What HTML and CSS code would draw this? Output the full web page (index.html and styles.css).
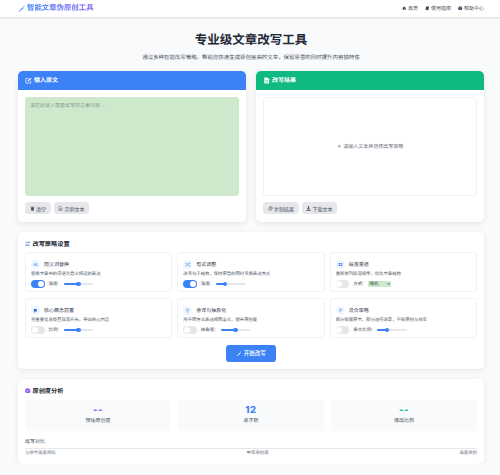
FILE: index.html
```html
<!DOCTYPE html>
<html lang="zh">
<head>
<meta charset="utf-8">
<title>智能文章伪原创工具</title>
<link rel="stylesheet" href="styles.css">
</head>
<body>
<header class="topbar">
  <div class="brand">
    <svg class="brand-icon" viewBox="0 0 16 16"><path d="M1 15 L11 5 L13 7 L3 15 Z M12 4 L14 1 L15 2 L13.500 5 Z" fill="#3b82f6"/></svg>
    <span class="brand-text">智能文章伪原创工具</span>
  </div>
  <nav class="nav">
    <a class="nav-item"><svg class="nav-icon" viewBox="0 0 16 16"><path d="M8 2 L15 8 H13 V14 H9.500 V10 H6.500 V14 H3 V8 H1 Z" fill="#374151"/></svg>首页</a>
    <a class="nav-item"><svg class="nav-icon" viewBox="0 0 16 16"><path d="M4 2 H14 L12 14 H2 Z" fill="#374151"/></svg>使用指南</a>
    <a class="nav-item"><svg class="nav-icon" viewBox="0 0 16 16"><circle cx="8" cy="8" r="7" fill="#374151"/><path d="M6 6.500 A2 2 0 1 1 8 8.500 V10 M8 11.500 V13" stroke="#fff" stroke-width="1.600" fill="none"/></svg>帮助中心</a>
  </nav>
</header>
<main class="page">
  <section class="hero">
    <h1 class="hero-title">专业级文章改写工具</h1>
    <p class="hero-sub">通过多种智能改写策略，帮助您快速生成原创度高的文章，保留原意的同时提升内容独特性</p>
  </section>
  <section class="editors">
    <article class="panel">
      <div class="panel-head head-blue">
        <svg class="head-icon" viewBox="0 0 16 16"><path d="M13 9 V14 H2 V3 H8" fill="none" stroke="#fff" stroke-width="1.500"/><path d="M6 10 L6.500 7.500 L13 1.500 L15 3.500 L8.500 9.500 Z" fill="#fff"/></svg>
        <span>输入原文</span>
      </div>
      <div class="panel-body">
        <div class="input-box">请在此输入需要改写的文章内容...</div>
        <div class="actions">
          <button class="btn"><svg class="btn-icon" viewBox="0 0 16 16"><path d="M3 5 H13 L12 15 H4 Z M2 2.500 H14 V4 H2 Z" fill="#4b5563"/></svg>清空</button>
          <button class="btn"><svg class="btn-icon" viewBox="0 0 16 16"><path d="M3 1.500 H10 L13 4.500 V14.500 H3 Z M5 8 H11 M5 11 H11" fill="none" stroke="#4b5563" stroke-width="1.400"/></svg>示例文本</button>
        </div>
      </div>
    </article>
    <article class="panel">
      <div class="panel-head head-green">
        <svg class="head-icon" viewBox="0 0 16 16"><path d="M3 1 H10 L14 5 V15 H3 Z" fill="#fff"/><path d="M5.500 8.500 H11.500 M5.500 11.500 H11.500" stroke="#10b981" stroke-width="1.300"/></svg>
        <span>改写结果</span>
      </div>
      <div class="panel-body">
        <div class="output-box">
          <svg class="hint-icon" viewBox="0 0 16 16"><path d="M8 2 V14 M2 8 H14" stroke="#9ca3af" stroke-width="3"/></svg>
          <span>请输入文本并选择改写策略</span>
        </div>
        <div class="actions">
          <button class="btn"><svg class="btn-icon" viewBox="0 0 16 16"><circle cx="7" cy="9" r="5.500" fill="none" stroke="#4b5563" stroke-width="1.400"/><circle cx="10" cy="6" r="4.500" fill="none" stroke="#4b5563" stroke-width="1.400"/></svg>复制结果</button>
          <button class="btn"><svg class="btn-icon" viewBox="0 0 16 16"><path d="M6 1 H10 V6 H13 L8 11 L3 6 H6 Z M1 12 H15 V15 H1 Z" fill="#4b5563"/></svg>下载文本</button>
        </div>
      </div>
    </article>
  </section>
  <section class="card settings">
    <h2 class="card-title">
      <svg class="title-icon" viewBox="0 0 16 16"><path d="M1 4 H9 M13 4 H15 M1 12 H3 M7 12 H15" stroke="#3b82f6" stroke-width="2"/><path d="M11 1.500 V6.500 M5 9.500 V14.500" stroke="#1e3a8a" stroke-width="2"/></svg>
      改写策略设置
    </h2>
    <div class="strategies">
      <div class="strategy">
        <div class="strategy-head"><span class="badge"><svg viewBox="0 0 16 16"><path d="M2 12 L4.500 4 L7 12 M3 9.500 H6 M9 4 V12 H12 A2 2 0 0 0 12 8 H9 M14 4 H9" fill="none" stroke="#3b82f6" stroke-width="1.300"/></svg></span><span class="strategy-name">同义词替换</span></div>
        <p class="strategy-desc">替换文章中的词语为意义相近的表达</p>
        <div class="controls"><span class="toggle on"></span><span class="ctl-label">强度:</span><span class="slider"><span class="fill fill-50"></span></span></div>
      </div>
      <div class="strategy">
        <div class="strategy-head"><span class="badge"><svg viewBox="0 0 16 16"><path d="M1 4 H4 L11 12 H14 M1 12 H4 L11 4 H14" fill="none" stroke="#3b82f6" stroke-width="1.800"/><path d="M13 1.500 L16 4 L13 6.500 Z M13 9.500 L16 12 L13 14.500 Z" fill="#3b82f6"/></svg></span><span class="strategy-name">句式调整</span></div>
        <p class="strategy-desc">改变句子结构，保持原意的同时变换表达方式</p>
        <div class="controls"><span class="toggle on"></span><span class="ctl-label">强度:</span><span class="slider"><span class="fill fill-25"></span></span></div>
      </div>
      <div class="strategy">
        <div class="strategy-head"><span class="badge"><svg viewBox="0 0 16 16"><path d="M2 3 H7 V7 H2 Z M9 3 H14 V7 H9 Z M2 9 H7 V13 H2 Z M9 9 H14 V13 H9 Z" fill="#3b82f6"/></svg></span><span class="strategy-name">段落重组</span></div>
        <p class="strategy-desc">重新排列段落顺序，优化文章结构</p>
        <div class="controls"><span class="toggle"></span><span class="ctl-label">方式:</span><span class="select">随机<svg class="caret" viewBox="0 0 8 8"><path d="M1 2.500 L4 5.500 L7 2.500" fill="none" stroke="#1f2937" stroke-width="1.500"/></svg></span></div>
      </div>
      <div class="strategy">
        <div class="strategy-head"><span class="badge"><svg viewBox="0 0 16 16"><path d="M3 3 H13 L11 7 L13 11 H5 V14 H3 Z" fill="#2563eb"/></svg></span><span class="strategy-name">核心概念前置</span></div>
        <p class="strategy-desc">将重要信息移至段落开头，突出核心内容</p>
        <div class="controls"><span class="toggle"></span><span class="ctl-label">比例:</span><span class="slider"><span class="fill fill-50"></span></span></div>
      </div>
      <div class="strategy">
        <div class="strategy-head"><span class="badge"><svg viewBox="0 0 16 16"><circle cx="8" cy="6" r="4" fill="none" stroke="#3b82f6" stroke-width="1.500"/><path d="M6 12 H10 M6.500 14 H9.500" stroke="#3b82f6" stroke-width="1.300"/></svg></span><span class="strategy-name">意译与抽象化</span></div>
        <p class="strategy-desc">用不同方式表达相同含义，提升原创度</p>
        <div class="controls"><span class="toggle"></span><span class="ctl-label">抽象度:</span><span class="slider"><span class="fill fill-50"></span></span></div>
      </div>
      <div class="strategy">
        <div class="strategy-head"><span class="badge"><svg viewBox="0 0 16 16"><path d="M6 13 V3 H9 A3 3 0 0 1 9 9 H6" fill="none" stroke="#3b82f6" stroke-width="1.500"/></svg></span><span class="strategy-name">混合策略</span></div>
        <p class="strategy-desc">部分保留原文，部分进行改写，平衡原创与效率</p>
        <div class="controls"><span class="toggle"></span><span class="ctl-label">原文比例:</span><span class="slider"><span class="fill fill-33"></span></span></div>
      </div>
    </div>
    <div class="submit-row">
      <button class="submit"><svg class="submit-icon" viewBox="0 0 16 16"><path d="M1 15 L11 5 L13 7 L3 15 Z M12 4 L14 1 L15 2 L13.500 5 Z" fill="#fff"/></svg>开始改写</button>
    </div>
  </section>
  <section class="card analysis">
    <h2 class="card-title">
      <svg class="title-icon" viewBox="0 0 16 16"><circle cx="8" cy="8" r="7.500" fill="#8b5cf6"/><path d="M4.500 8 L7 10.500 L11.500 5.500" fill="none" stroke="#fff" stroke-width="2"/></svg>
      原创度分析
    </h2>
    <div class="stats">
      <div class="stat"><div class="stat-value purple">--</div><div class="stat-label">预估原创度</div></div>
      <div class="stat"><div class="stat-value blue">12</div><div class="stat-label">总字数</div></div>
      <div class="stat"><div class="stat-value green">--</div><div class="stat-label">修改比例</div></div>
    </div>
    <div class="compare-label">改写对比</div>
    <div class="compare-bar"></div>
    <div class="compare-scale"><span>与原文高度相似</span><span>中等原创度</span><span>高度原创</span></div>
  </section>
</main>
</body>
</html>
```
FILE: styles.css
```css
* { box-sizing: border-box; }
html, body { margin: 0; padding: 0; }
body {
  background: #f9fafb;
  color: #1f2937;
  font-family: "Noto Sans CJK SC", "Noto Sans", sans-serif;
  font-size: 5px;
  line-height: 1.4;
  text-rendering: geometricPrecision;
}
svg { display: block; flex: none; }

.topbar {
  height: 17px;
  background: #fff;
  box-shadow: 0 1px 2px rgba(0, 0, 0, .12);
  padding: 0 16px 0 18px;
  display: flex;
  align-items: center;
  justify-content: space-between;
}
.brand { display: flex; align-items: center; gap: 2px; }
.brand-icon { width: 7px; height: 7px; }
.brand-text {
  font-size: 7.4px;
  font-weight: 700;
  background: linear-gradient(90deg, #3b82f6, #8b5cf6);
  -webkit-background-clip: text;
  background-clip: text;
  color: transparent;
}
.nav { display: flex; gap: 7.5px; }
.nav-item { display: flex; align-items: center; gap: 1px; font-size: 5px; color: #4b5563; }
.nav-icon { width: 4.5px; height: 4.5px; }

.page { padding: 13px 16px 0 18px; }
.hero { text-align: center; }
.hero-title { margin: 0; font-size: 12.5px; line-height: 18px; font-weight: 700; color: #1f2937; }
.hero-sub { margin: 5px 0 0; font-size: 5.45px; line-height: 8px; color: #4b5563; }

.editors { margin-top: 10px; display: grid; grid-template-columns: 1fr 1fr; gap: 10px; }
.panel { background: #fff; border-radius: 5px; box-shadow: 0 2px 6px rgba(0, 0, 0, .08); overflow: hidden; height: 151px; }
.panel-head { height: 19px; padding: 0 7px; display: flex; align-items: center; gap: 2px; color: #fff; font-size: 6px; font-weight: 700; }
.head-blue { background: #3b82f6; }
.head-green { background: #10b981; }
.head-icon { width: 7px; height: 7px; }
.panel-body { padding: 7px 7px 0; }
.input-box { height: 99px; background: #cde8cb; border-radius: 3px; padding: 5px; font-size: 5px; color: #8f9d92; }
.output-box {
  height: 99px;
  border: .5px solid #eef0f3;
  border-radius: 3px;
  display: flex;
  align-items: center;
  justify-content: center;
  gap: 2px;
  font-size: 5px;
  color: #6b7280;
}
.hint-icon { width: 4.5px; height: 4.5px; }
.actions { margin-top: 6px; display: flex; gap: 3px; }
.btn {
  height: 12px;
  padding: 0 4.5px;
  border: 0;
  border-radius: 3px;
  background: #e5e7eb;
  color: #4b5563;
  font: inherit;
  font-size: 5px;
  display: flex;
  align-items: center;
  gap: 1.5px;
}
.btn-icon { width: 5px; height: 5px; }

.card { background: #fff; border-radius: 5px; box-shadow: 0 2px 6px rgba(0, 0, 0, .07); padding: 7px; margin-top: 10px; }
.settings { height: 137px; }
.card-title { margin: 0; display: flex; align-items: center; gap: 2px; font-size: 6.2px; line-height: 9px; font-weight: 700; color: #1f2937; }
.title-icon { width: 5.5px; height: 5.5px; }

.strategies { margin-top: 4px; display: grid; grid-template-columns: repeat(3, 1fr); gap: 6px 5px; }
.strategy { height: 40px; border: .5px solid #f0f2f5; border-radius: 3px; padding: 6px 5px 0; }
.strategy-head { display: flex; align-items: center; gap: 4px; height: 10px; }
.badge { width: 9px; height: 9px; border-radius: 50%; background: #eff6ff; display: flex; align-items: center; justify-content: center; }
.badge svg { width: 5px; height: 5px; }
.strategy-name { font-size: 5px; color: #374151; }
.strategy-desc { margin: 2px 0 0; font-size: 4.35px; line-height: 6px; color: #4b5563; white-space: nowrap; }
.controls { margin-top: 3px; display: flex; align-items: center; gap: 4px; }
.toggle { width: 13.5px; height: 7.5px; border-radius: 4px; background: #e5e7eb; position: relative; flex: none; }
.toggle::after { content: ""; position: absolute; left: .75px; top: .75px; width: 6px; height: 6px; border-radius: 50%; background: #fff; }
.toggle.on { background: #3b82f6; }
.toggle.on::after { left: auto; right: .75px; }
.ctl-label { font-size: 4.5px; color: #4b5563; margin-right: 1px; white-space: nowrap; }
.slider { width: 29.5px; height: 2px; border-radius: 1px; background: #e5e7eb; position: relative; }
.fill { position: absolute; left: 0; top: 0; bottom: 0; background: #3b82f6; border-radius: 1px; }
.fill::after { content: ""; position: absolute; right: -2.25px; top: -1.25px; width: 4.5px; height: 4.5px; border-radius: 50%; background: #3b82f6; }
.fill-50 { width: 50%; }
.fill-25 { width: 30%; }
.fill-33 { width: 33%; }
.select { width: 23px; height: 6px; background: #cde8cb; border-radius: 1px; padding-left: 1px; font-size: 4.5px; line-height: 6px; color: #374151; display: flex; align-items: center; justify-content: space-between; }
.caret { width: 3.5px; height: 3.5px; margin-right: 1px; }

.submit-row { margin-top: 7px; display: flex; justify-content: center; }
.submit { width: 50px; height: 17px; border: 0; border-radius: 3px; background: #3b82f6; color: #fff; font: inherit; font-size: 5.5px; font-weight: 500; display: flex; align-items: center; justify-content: center; gap: 2px; }
.submit-icon { width: 5.5px; height: 5.5px; }

.analysis { height: 85px; }
.stats { margin-top: 5px; display: grid; grid-template-columns: repeat(3, 1fr); gap: 7px; }
.stat { height: 31px; background: #f9fafb; border-radius: 3px; padding-top: 5px; text-align: center; }
.stat-value { font-family: "Inter", "Noto Sans", sans-serif; font-size: 9.5px; line-height: 12px; font-weight: 800; letter-spacing: .5px; }
.purple { color: #8b5cf6; }
.blue { color: #3b82f6; }
.green { color: #10b981; }
.stat-label { font-size: 5px; line-height: 7px; color: #4b5563; }
.compare-label { margin-top: 7px; font-size: 5px; line-height: 8px; color: #4b5563; }
.compare-bar { margin-top: 2px; height: 1px; background: #e5e7eb; }
.compare-scale { margin-top: 1px; display: flex; justify-content: space-between; font-size: 4.4px; line-height: 7px; color: #6b7280; }
```
